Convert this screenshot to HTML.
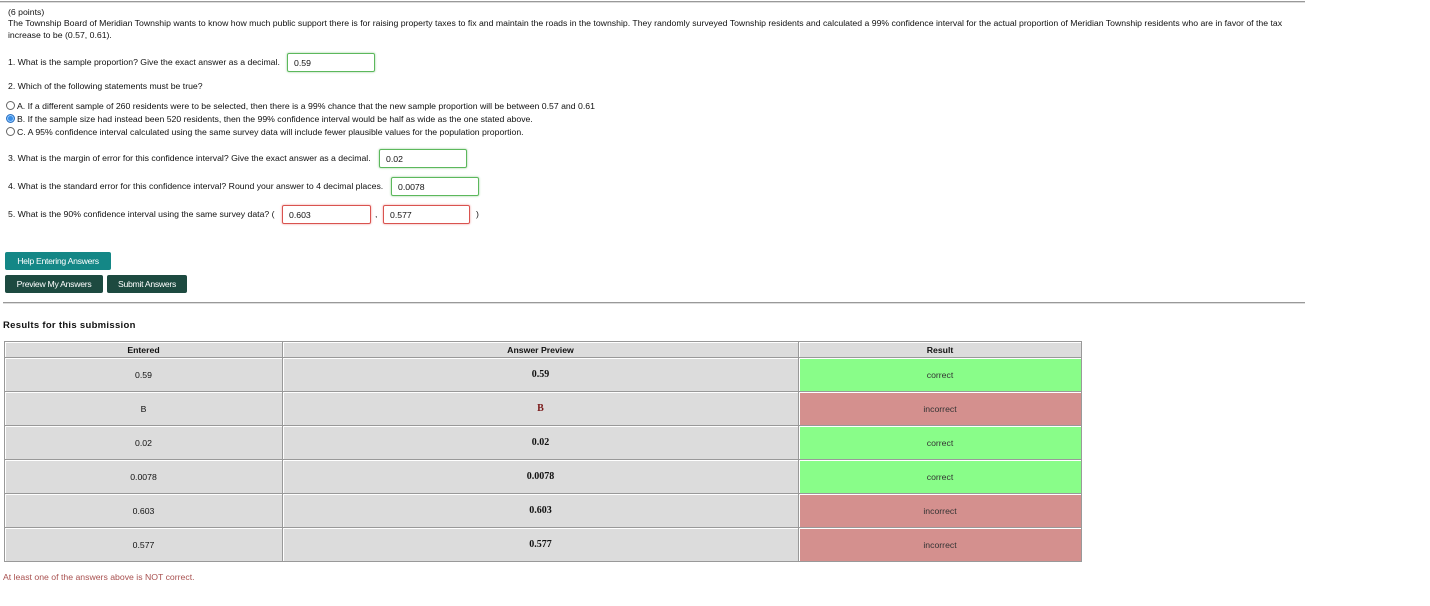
<!DOCTYPE html>
<html><head><meta charset="utf-8"><style>
body{margin:0;width:1430px;height:606px;background:#fff;font-family:"Liberation Sans",Arial,sans-serif;font-size:8.7px;color:#111;position:relative;overflow:hidden}
.a{position:absolute;white-space:nowrap}
.hr{position:absolute;height:1px;background:#999;border-bottom:1px solid #ddd}
.in{position:absolute;height:18px;border:1px solid #5cb85c;border-radius:2px;box-sizing:border-box;padding:4px 0 0 6px;font-size:8.7px;box-shadow:0 0 2px #9c9}
.bad{border-color:#d9534f;box-shadow:0 0 2px #e99}
.btn{position:absolute;height:18px;color:#fff;font-size:8.7px;line-height:18px;text-align:center;border-radius:2px;letter-spacing:-0.3px}
.rad{display:inline-block;width:7px;height:7px;border:1px solid #666;border-radius:50%;vertical-align:-1px;margin-right:2px}
table{position:absolute;left:4px;top:341px;border-collapse:collapse;width:1078px}
td,th{border:1px solid #999;box-shadow:inset 1px 1px 0 #fff;background:#dcdcdc;text-align:center;font-size:8.7px;padding:0}
th{height:15px;font-weight:bold}
td{height:33px}
.s{font-family:"Liberation Serif",serif;font-weight:bold;font-size:10px}
.g{background:#89fd89;color:#333}
.r{background:#d4908e;color:#333}
</style></head><body>
<div class="hr" style="left:0;top:1px;width:1305px"></div>
<div class="a" style="left:8px;top:7px">(6 points)</div>
<div class="a" style="left:8px;top:18px">The Township Board of Meridian Township wants to know how much public support there is for raising property taxes to fix and maintain the roads in the township. They randomly surveyed Township residents and calculated a 99% confidence interval for the actual proportion of Meridian Township residents who are in favor of the tax</div>
<div class="a" style="left:8px;top:30px">increase to be (0.57, 0.61).</div>
<div class="a" style="left:8px;top:57px">1. What is the sample proportion? Give the exact answer as a decimal.</div>
<div class="in" style="left:287px;top:53px;width:88px;height:19px">0.59</div>
<div class="a" style="left:8px;top:81px">2. Which of the following statements must be true?</div>
<div class="a" style="left:6px;top:101px"><span class="rad"></span>A. If a different sample of 260 residents were to be selected, then there is a 99% chance that the new sample proportion will be between 0.57 and 0.61</div>
<div class="a" style="left:6px;top:114px"><span class="rad" style="background:#3a8ee6;border-color:#2a6fc0;box-shadow:inset 0 0 0 1px #9cf"></span>B. If the sample size had instead been 520 residents, then the 99% confidence interval would be half as wide as the one stated above.</div>
<div class="a" style="left:6px;top:127px"><span class="rad"></span>C. A 95% confidence interval calculated using the same survey data will include fewer plausible values for the population proportion.</div>
<div class="a" style="left:8px;top:153px">3. What is the margin of error for this confidence interval? Give the exact answer as a decimal.</div>
<div class="in" style="left:379px;top:149px;width:88px;height:19px">0.02</div>
<div class="a" style="left:8px;top:181px">4. What is the standard error for this confidence interval? Round your answer to 4 decimal places.</div>
<div class="in" style="left:391px;top:177px;width:88px;height:19px">0.0078</div>
<div class="a" style="left:8px;top:209px">5. What is the 90% confidence interval using the same survey data? (</div>
<div class="in bad" style="left:282px;top:205px;width:89px;height:19px">0.603</div>
<div class="a" style="left:375px;top:209px">,</div>
<div class="in bad" style="left:383px;top:205px;width:87px;height:19px">0.577</div>
<div class="a" style="left:476px;top:209px">)</div>
<div class="btn" style="left:5px;top:252px;width:106px;background:#148786">Help Entering Answers</div>
<div class="btn" style="left:5px;top:275px;width:98px;background:#1d4a40">Preview My Answers</div>
<div class="btn" style="left:107px;top:275px;width:80px;background:#1d4a40">Submit Answers</div>
<div class="hr" style="left:3px;top:302px;width:1302px"></div>
<div class="a" style="left:3px;top:320px;font-weight:bold;font-size:9.5px;letter-spacing:0.3px">Results for this submission</div>
<table>
<tr><th style="width:277px">Entered</th><th style="width:515px">Answer Preview</th><th>Result</th></tr>
<tr><td>0.59</td><td class="s">0.59</td><td class="g">correct</td></tr>
<tr><td>B</td><td class="s" style="color:#7a1a1a">B</td><td class="r">incorrect</td></tr>
<tr><td>0.02</td><td class="s">0.02</td><td class="g">correct</td></tr>
<tr><td>0.0078</td><td class="s">0.0078</td><td class="g">correct</td></tr>
<tr><td>0.603</td><td class="s">0.603</td><td class="r">incorrect</td></tr>
<tr><td>0.577</td><td class="s">0.577</td><td class="r">incorrect</td></tr>
</table>
<div class="a" style="left:3px;top:572px;color:#a8504f">At least one of the answers above is NOT correct.</div>
</body></html>
